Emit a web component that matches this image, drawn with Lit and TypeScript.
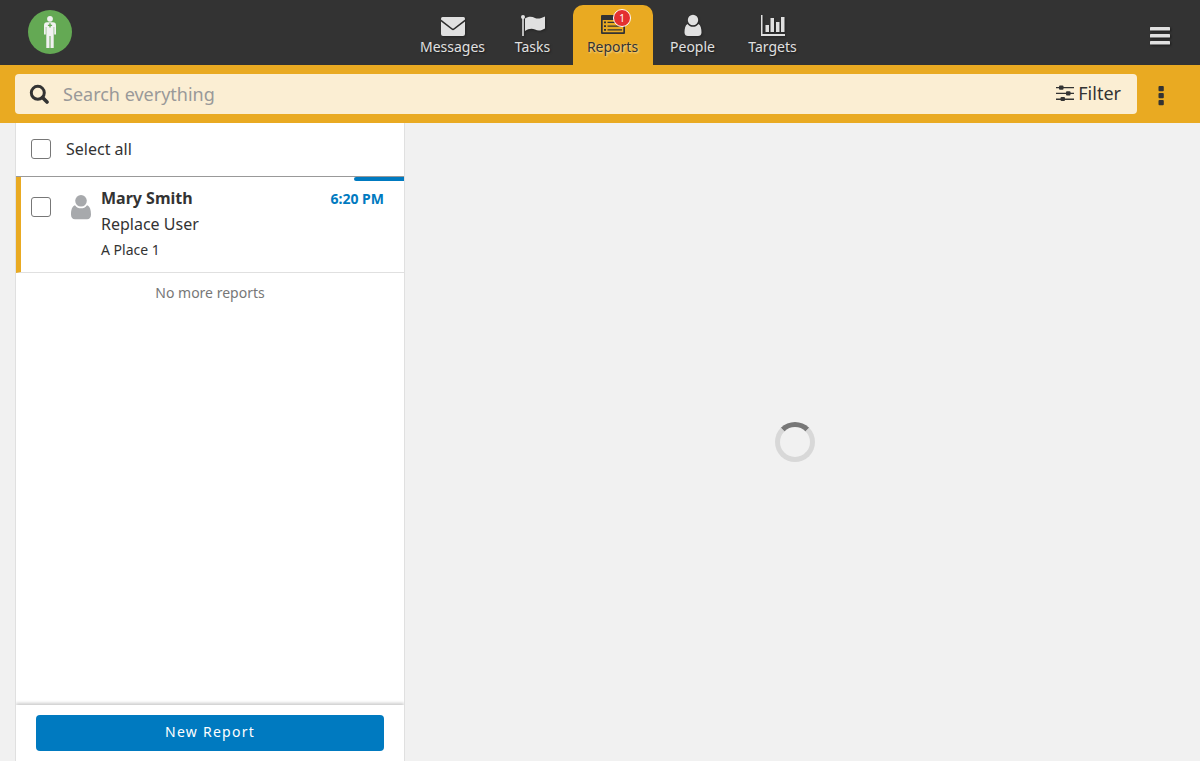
import { LitElement, html, css, svg } from "lit";
import { customElement, property } from "lit/decorators.js";

const icons: Record<string, unknown> = {
  messages: svg`<path d="M1.500 4H22.500Q24 4 24 5.500V6.600L12.800 15.300Q12 15.800 11.200 15.300L0 6.600V5.500Q0 4 1.500 4Z"/><path d="M0 8.600L10.500 16.600Q12 17.800 13.500 16.600L24 8.600V21Q24 23 22 23H2Q0 23 0 21Z"/>`,
  tasks: svg`<circle cx="2" cy="4" r="2"/><path d="M1.200 4H2.800V23H1.200Z"/><path d="M4 5.500C7 3.500 10.500 3 14 5C17 6.500 20.500 5 24 3.500V15.500C20.500 17.500 17.500 18.500 14 16.500C11 15 7.500 15.500 4 18Z"/>`,
  reports: svg`<path fill-rule="evenodd" d="M1 2H23Q24 2 24 3V20Q24 21 23 21H1Q0 21 0 20V3Q0 2 1 2ZM1.700 7V19.300H22.300V7Z"/><path d="M3 8.500H5V10.300H3ZM3 12.200H5V14H3ZM3 16H5V17.800H3ZM6.500 8.700H21V10.100H6.500ZM6.500 12.400H21V13.800H6.500ZM6.500 16.200H21V17.600H6.500Z"/>`,
  people: svg`<circle cx="12" cy="7" r="5.200"/><path d="M6.500 11C8 13.200 10 13.800 12 13.800S16 13.200 17.500 11C19.700 12.200 20.500 15.500 20.500 19.500C20.500 22 19 23 17 23H7C5 23 3.500 22 3.500 19.500C3.500 15.500 4.300 12.200 6.500 11Z"/>`,
  targets: svg`<path d="M0 2H1.500V21H24V23H0ZM4.500 12H8V19H4.500ZM9.500 5H13V19H9.500ZM15 9H18.500V19H15ZM20 4H23.500V19H20Z"/>`,
};

@customElement("nav-tab")
class NavTab extends LitElement {
  @property() label = "";
  @property() icon = "";
  @property({ type: Boolean }) active = false;
  @property({ type: Number }) count = 0;

  static styles = css`
    :host { display: block; width: 80px; }
    .tab {
      position: relative;
      display: flex;
      flex-direction: column;
      align-items: center;
      height: 60px;
      box-sizing: border-box;
      padding: 8px 1px 0 0;
      border-radius: 10px 10px 0 0;
      color: #e0e0e0;
      font-size: 14px;
      line-height: 20px;
      text-decoration: none;
      text-shadow: 1px 1px 2px rgba(0, 0, 0, 0.5);
    }
    .active {
      background: #e9aa22;
      color: #333;
      text-shadow: 1px 1px 2px rgba(255, 255, 255, 0.6);
    }
    .icon { display: block; width: 24px; height: 24px; fill: currentColor; filter: drop-shadow(1px 1px 1px rgba(0, 0, 0, 0.3)); }
    .active .icon { filter: none; }
    .badge {
      position: absolute;
      top: 4px;
      left: 40px;
      width: 16px;
      height: 16px;
      border: 1px solid #fff;
      border-radius: 50%;
      background: #e33030;
      color: #fff;
      font-size: 10px;
      line-height: 16px;
      text-align: center;
      text-shadow: none;
    }
  `;

  render() {
    return html`<a class="tab ${this.active ? "active" : ""}" href="#${this.icon}">
      <svg class="icon" viewBox="0 0 24 24" aria-hidden="true">${icons[this.icon]}</svg>
      <span>${this.label}</span>
      ${this.count ? html`<span class="badge">${this.count}</span>` : ""}
    </a>`;
  }
}

@customElement("app-root")
class AppRoot extends LitElement {
  static styles = css`
    :host {
      display: flex;
      flex-direction: column;
      height: 100vh;
      background: #f1f1f1;
      color: #333;
      font-family: "Noto Sans", sans-serif;
      font-size: 16px;
    }
    * { box-sizing: border-box; }
    button, input { font: inherit; color: inherit; }
    button { border: 0; background: none; cursor: pointer; }
    svg { display: block; }
    .header { display: flex; height: 65px; background: #333; }
    .logo { padding: 10px 28px; }
    .tabs { flex: 1; display: flex; justify-content: center; padding-top: 5px; }
    .menu { padding: 6px 30px 0 24px; color: #e0e0e0; }
    .menu svg { filter: drop-shadow(1px 1px 1px rgba(0, 0, 0, 0.5)); }
    .toolbar { display: flex; height: 58px; padding: 9px 15px; background: #e9aa22; }
    .search {
      flex: 1;
      display: flex;
      align-items: center;
      height: 40px;
      padding: 0 16px 0 14px;
      border-radius: 4px;
      background: #fbeed3;
      font-size: 18px;
    }
    .query { flex: 1; min-width: 0; height: 40px; margin-left: 14px; padding: 0; border: 0; outline: 0; background: none; }
    .query::placeholder { color: #999; opacity: 1; }
    .filter { display: flex; align-items: center; gap: 4px; padding: 0 0 2px; }
    .more { width: 48px; display: flex; justify-content: center; padding: 12px 0 0; }
    .content { flex: 1; display: flex; min-height: 0; padding: 0 15px; }
    .list {
      flex: 0 0 390px;
      display: flex;
      flex-direction: column;
      border: 1px solid #e0e0e0;
      border-width: 0 1px;
      background: #fff;
    }
    .check {
      appearance: none;
      width: 20px;
      height: 20px;
      margin: 0;
      border: 1px solid #777;
      border-radius: 3px;
      background: #fff;
    }
    .select-all { display: flex; align-items: center; gap: 15px; height: 54px; padding: 0 15px 2px; border-bottom: 1px solid #999; }
    .items { flex: 1; overflow: auto; }
    .item {
      position: relative;
      display: flex;
      height: 96px;
      padding: 8px 20px 0 10px;
      border-left: 5px solid #e9aa22;
      border-bottom: 1px solid #e0e0e0;
    }
    .item::after {
      content: "";
      position: absolute;
      top: 0;
      right: 0;
      width: 50px;
      height: 4px;
      border-radius: 4px 0 0 4px;
      background: #007ac0;
    }
    .item .check { margin-top: 12px; }
    .avatar { margin: 8px 6px 0 16px; fill: #a7a9ac; }
    .details { flex: 1; line-height: 26px; }
    .heading { display: flex; justify-content: space-between; font-weight: 700; }
    .name { margin: 0; font-size: 16px; }
    .time { color: #007ac0; font-size: 14px; line-height: 28px; height: 26px; }
    .text { margin: 0; }
    .place { font-size: 14px; }
    .end { margin: 10px 0; color: #777; font-size: 14px; line-height: 20px; text-align: center; }
    .footer { padding: 10px 20px; box-shadow: 0 -2px 3px rgba(0, 0, 0, 0.2); clip-path: inset(-5px 0 0 0); }
    .new { display: block; width: 100%; height: 36px; padding: 0 0 2px; border-radius: 4px; background: #007ac0; color: #fff; font-size: 14px; line-height: 20px; letter-spacing: 0.09em; }
    .detail { flex: 1; display: grid; place-items: center; }
    .spinner { width: 40px; height: 40px; border: 5px solid #d8d8d8; border-top-color: #777; border-radius: 50%; }
  `;

  render() {
    return html`
      <header class="header">
        <a class="logo" href="#home" aria-label="Home">
          <svg width="44" height="44" viewBox="0 0 44 44">
            <circle cx="22" cy="22" r="22" fill="#64a954"/>
            <g fill="#f1f1f1">
              <circle cx="22" cy="8.800" r="2.900"/>
              <path d="M19 12.200H25Q28 12.200 28 15.400V24.400H26.200V17H25.700V38H22.500V26H21.500V38H18.300V17H17.800V24.400H16V15.400Q16 12.200 19 12.200Z"/>
            </g>
            <path d="M21.300 13.300H22.700V14.700H24.100V16.100H22.700V17.500H21.300V16.100H19.900V14.700H21.300Z" fill="#64a954"/>
          </svg>
        </a>
        <nav class="tabs">
          <nav-tab label="Messages" icon="messages"></nav-tab>
          <nav-tab label="Tasks" icon="tasks"></nav-tab>
          <nav-tab label="Reports" icon="reports" active count="1"></nav-tab>
          <nav-tab label="People" icon="people"></nav-tab>
          <nav-tab label="Targets" icon="targets"></nav-tab>
        </nav>
        <button class="menu" aria-label="Menu">
          <svg width="20" height="18" viewBox="0 0 20 18" fill="currentColor">
            <rect width="20" height="3.600" rx=".6"/><rect y="7" width="20" height="3.600" rx=".6"/><rect y="14" width="20" height="3.600" rx=".6"/>
          </svg>
        </button>
      </header>
      <div class="toolbar">
        <div class="search">
          <svg width="20" height="20" viewBox="0 0 20 20" fill="none" stroke="#333" stroke-width="3">
            <circle cx="8.800" cy="8.800" r="6.500"/><path d="M13.500 13.500L18 18" stroke-width="3.600" stroke-linecap="round"/>
          </svg>
          <input class="query" type="text" placeholder="Search everything" aria-label="Search everything">
          <button class="filter">
            <svg width="18" height="16" viewBox="0 0 18 16" fill="#333">
              <path d="M0 2H18V3.300H0ZM0 7.800H18V9.100H0ZM0 13.600H18V14.900H0Z"/>
              <rect x="3" y="0.500" width="4.500" height="4.300" rx="1"/><rect x="10" y="6.300" width="4.500" height="4.300" rx="1"/><rect x="4.500" y="12.100" width="4.500" height="3.900" rx="1"/>
            </svg>
            Filter
          </button>
        </div>
        <button class="more" aria-label="More actions">
          <svg width="6" height="20" viewBox="0 0 6 20" fill="#333">
            <rect x=".5" width="5.300" height="5.300" rx="1"/><rect x=".5" y="7" width="5.300" height="5.300" rx="1"/><rect x=".5" y="14" width="5.300" height="5.300" rx="1"/>
          </svg>
        </button>
      </div>
      <main class="content">
        <section class="list">
          <label class="select-all"><input class="check" type="checkbox">Select all</label>
          <div class="items">
            <article class="item">
              <input class="check" type="checkbox" aria-label="Select Mary Smith">
              <svg class="avatar" width="28" height="28" viewBox="0 0 28 28">
                <circle cx="14" cy="7.800" r="5.800"/>
                <path d="M8 12.200C9.500 14.500 11.800 15.300 14 15.300S18.500 14.500 20 12.200C23 13.200 24 17 24 21.500C24 24.700 22.500 26.200 20 26.200H8C5.500 26.200 4 24.700 4 21.500C4 17 5 13.200 8 12.200Z"/>
              </svg>
              <div class="details">
                <div class="heading"><h4 class="name">Mary Smith</h4><span class="time">6:20 PM</span></div>
                <p class="text">Replace User</p>
                <p class="text place">A Place 1</p>
              </div>
            </article>
            <p class="end">No more reports</p>
          </div>
          <div class="footer"><button class="new">New Report</button></div>
        </section>
        <section class="detail"><div class="spinner" role="status" aria-label="Loading"></div></section>
      </main>
    `;
  }
}
